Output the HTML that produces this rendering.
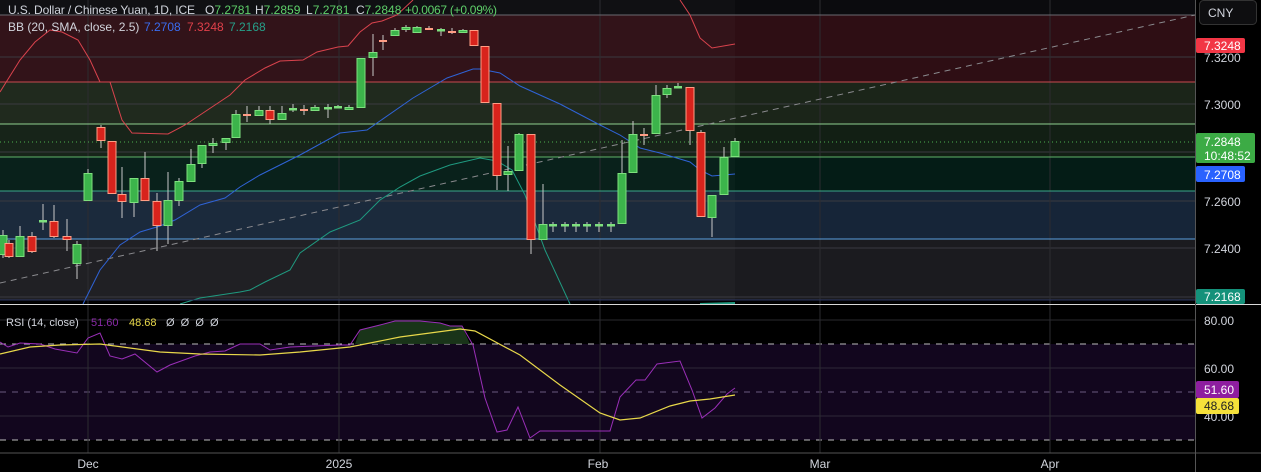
<!DOCTYPE html>
<html><head><meta charset="utf-8">
<style>
html,body{margin:0;padding:0;background:#000;}
body{width:1261px;height:472px;overflow:hidden;position:relative;font-family:"Liberation Sans",sans-serif;}
svg{position:absolute;left:0;top:0;}
</style></head>
<body>
<svg id="s" width="1261" height="472" viewBox="0 0 1261 472" xmlns="http://www.w3.org/2000/svg"></svg>
<script>
var o='';
function R(x,y,w,h,f,ex){o+='<rect x="'+x+'" y="'+y+'" width="'+w+'" height="'+h+'" fill="'+f+'" '+(ex||'')+'/>';}
function L(x1,y1,x2,y2,c,ex){o+='<line x1="'+x1+'" y1="'+y1+'" x2="'+x2+'" y2="'+y2+'" stroke="'+c+'" '+(ex||'')+'/>';}
function P(pts,c,w,ex){o+='<polyline fill="none" stroke="'+c+'" stroke-width="'+(w||1)+'" points="'+pts.map(function(p){return p.join(',')}).join(' ')+'" '+(ex||'')+'/>';}
function T(x,y,t,c,sz,ex){o+='<text x="'+x+'" y="'+y+'" fill="'+c+'" font-size="'+(sz||12)+'" font-family="Liberation Sans, sans-serif" '+(ex||'')+'>'+t+'</text>';}
var W=1195;
R(0,0,W,300,'#0b0b0e');
R(0,15,W,67,'#2e0e14');
R(0,82,W,42,'#1b2519');
R(0,124,W,33,'#121f14');
R(0,157,W,34,'#041c16');
R(0,191,W,48,'#162538');
R(0,239,W,61,'#1b1b1f');
R(0,0,735,300,'#ffffff','opacity="0.025"');
[57,104,152,201,248,297].forEach(function(y){L(0,y,W,y,'#3a3a40');});
[88,339,600,820,1050].forEach(function(x){L(x,0,x,453,'#2c2c30');});
L(0,15,W,15,'#6a6a70');
L(0,82,W,82,'#c84a50');
L(0,124,W,124,'#8fd08f');
L(0,157,W,157,'#5fb36a');
L(0,191,W,191,'#3aa88a');
L(0,239,W,239,'#5aa0e0');
L(0,142,W,142,'#4caf50','stroke-dasharray="1,3"');
L(0,283,W,15,'#8a8a8e','stroke-dasharray="6,5"');
P([[0,92],[20,60],[35,42],[50,30],[62,32],[78,40],[90,60],[100,82],[110,82],[122,120],[132,133],[168,134],[185,125],[200,115],[230,95],[245,80],[265,68],[280,61],[303,60],[317,52],[338,47],[348,46],[360,32],[372,23],[382,21],[397,15],[413,0]],'#d9434d',1);
P([[680,0],[690,15],[700,38],[712,48],[735,44]],'#d9434d',1);
P([[83,304],[100,270],[120,245],[140,232],[160,226],[175,220],[200,205],[225,198],[240,187],[260,175],[300,155],[340,133],[367,130],[413,98],[447,78],[473,69],[480,69],[500,73],[520,86],[560,104],[600,125],[620,135],[640,148],[660,153],[690,162],[700,170],[712,176],[735,174]],'#2f63d6',1);
P([[180,304],[200,298],[240,292],[250,290],[265,282],[290,270],[300,253],[330,232],[360,220],[380,200],[400,187],[420,176],[450,165],[480,158],[497,161],[512,170],[525,195],[545,250],[570,304]],'#1f9a80',1);
P([[700,304],[735,303]],'#1f9a80',2);
var C=[[3,'g',235,255,230,258],[9,'r',243,257,240,258],[20,'g',236,257,226,257],[32,'r',236,252,232,253],[43,'g',220,222,204,230],[54,'r',221,237,205,238],[67,'r',236,240,219,251],[77,'g',244,264,241,279],[88,'g',173,201,169,201],[101,'r',127,141,125,148],[112,'r',141,194,141,194],[122,'r',194,202,167,218],[134,'g',178,203,178,217],[145,'r',178,201,152,201],[157,'r',201,226,193,251],[168,'g',200,226,172,244],[179,'g',181,201,178,206],[191,'g',164,182,149,182],[202,'g',145,164,145,168],[213,'g',143,146,138,153],[226,'g',138,143,138,150],[236,'g',114,138,110,138],[247,'o',114,115,106,122],[259,'g',110,116,106,116],[270,'r',110,120,106,124],[282,'g',113,120,106,120],[293,'g',108,110,104,112],[304,'o',109,111,105,115],[315,'g',107,111,105,111],[328,'g',107,108,104,118],[338,'g',106,108,105,108],[349,'g',107,110,105,110],[361,'g',58,108,58,108],[373,'g',52,58,34,76],[383,'o',40,43,35,50],[395,'g',30,36,28,36],[406,'g',27,30,25,32],[417,'g',27,33,26,33],[429,'o',28,29,26,30],[441,'g',29,30,28,36],[452,'o',31,33,28,34],[463,'g',30,33,29,33],[474,'r',30,46,30,46],[485,'r',46,103,46,103],[497,'r',103,176,103,190],[508,'g',171,175,146,191],[519,'g',134,171,133,171],[531,'r',134,240,134,254],[543,'g',224,240,184,240],[553,'g',224,225,222,232],[565,'g',224,225,222,232],[576,'g',224,225,222,232],[587,'g',224,225,222,232],[599,'g',224,225,222,232],[611,'g',224,225,222,232],[622,'g',173,224,140,224],[633,'g',134,173,121,173],[644,'o',134,135,128,145],[656,'g',95,134,85,134],[667,'g',88,95,85,98],[678,'g',86,88,83,88],[690,'r',87,131,87,145],[701,'r',132,217,130,217],[712,'g',195,218,195,237],[724,'g',157,195,147,195],[735,'g',141,157,138,157]];
C.forEach(function(c){var x=c[0],fill,st;
 if(c[1]=='g'){fill='#3cb44b';st='#7ee07e';}else{fill='#d8231c';st='#ff9d85';}
 L(x,c[4],x,c[5],'#c8c8c8');
 var h=Math.max(c[3]-c[2],1.5);
 if(c[1]=='o'){R(x-4,c[2],8,2,'#ff9d85');}
 else if(h<3){R(x-4,c[2],8,2.5,st);}
 else R(x-4,c[2]+0.5,8,h-1,fill,'stroke="'+st+'" stroke-width="1"');
});
L(0,300,W,300,'#2a3560');
L(0,304.5,1261,304.5,'#d8d8d8');
R(0,344,W,96,'#12061e');
L(0,344,W,344,'#bcbcbc','stroke-dasharray="6,6"');
L(0,392,W,392,'#6a5a80','stroke-dasharray="6,6"');
L(0,440,W,440,'#bcbcbc','stroke-dasharray="6,6"');
L(0,368,W,368,'#2e2838');L(0,416,W,416,'#2e2838');L(0,320,W,320,'#2a2a2e');
[88,339,600,820,1050].forEach(function(x){L(x,305,x,453,'#2c2c30');});
o+='<polygon points="355,344 360,330 380,325 395,321 420,321 440,323 450,326 462,326 470,344" fill="#1c3a1c" opacity="0.9"/>';
P([[0,342],[8,347],[20,343],[40,344],[55,349],[77,353],[88,338],[100,333],[110,356],[122,359],[135,354],[157,372],[170,365],[195,356],[210,352],[225,351],[240,344],[260,344],[270,350],[290,347],[340,345],[350,345],[360,330],[380,325],[395,321],[420,321],[440,323],[450,326],[462,326],[473,345],[485,398],[497,432],[507,430],[518,407],[530,438],[540,431],[610,431],[620,397],[636,380],[645,380],[657,364],[680,361],[692,390],[702,418],[715,408],[727,394],[735,388]],'#9a2fb8',1);
P([[0,354],[30,347],[60,345],[100,344],[160,352],[200,354],[260,355],[300,352],[350,347],[400,337],[460,329],[475,331],[520,355],[560,385],[600,413],[620,420],[640,418],[670,406],[690,401],[710,399],[735,395]],'#e8d84a',1.2);
L(0,453,1261,453,'#555');
L(W+0.5,0,W+0.5,472,'#555');
T(8,14,'U.S. Dollar / Chinese Yuan, 1D, ICE','#d1d4dc',12,'textLength="187"');
T(205,14,'O<tspan fill="#5fd06a">7.2781</tspan>','#d1d4dc',12);
T(255,14,'H<tspan fill="#5fd06a">7.2859</tspan>','#d1d4dc',12);
T(306,14,'L<tspan fill="#5fd06a">7.2781</tspan>','#d1d4dc',12);
T(356,14,'C<tspan fill="#5fd06a">7.2848</tspan>','#d1d4dc',12);
T(405,14,'+0.0067 (+0.09%)','#5fd06a',12,'textLength="92"');
T(8,31,'BB (20, SMA, close, 2.5)','#d1d4dc',12);
T(144,31,'7.2708','#3a6cf0',12);T(187,31,'7.3248','#e0404a',12);T(229,31,'7.2168','#26a08a',12);
T(6,326,'RSI (14, close)','#d1d4dc',11);T(91,326,'51.60','#8a2aa8',11);T(129,326,'48.68','#e8d84a',11);
T(166,326,'Ø  Ø  Ø  Ø','#d1d4dc',11,'xml:space="preserve"');
o+='<rect x="1199.5" y="0.5" width="57" height="24" rx="4" fill="#0e0e10" stroke="#333"/>';
T(1208,17,'CNY','#d1d4dc',12);
[[57,'7.3200'],[104,'7.3000'],[201,'7.2600'],[248,'7.2400'],[320,'80.00'],[368,'60.00'],[416,'40.00']].forEach(function(a){T(1204,a[0]+5,a[1],'#d1d4dc',12);});
o+='<rect x="1196" y="38" width="49" height="15" rx="2" fill="#f23645"/>';T(1204,50,'7.3248','#fff',12);
o+='<rect x="1196" y="133" width="59" height="30" rx="2" fill="#3cab45"/>';T(1204,146,'7.2848','#fff',12);T(1204,160,'10:48:52','#fff',12);
o+='<rect x="1196" y="166" width="49" height="16" rx="2" fill="#2962ff"/>';T(1204,179,'7.2708','#fff',12);
o+='<rect x="1196" y="289" width="49" height="15" rx="2" fill="#14917a"/>';T(1204,301,'7.2168','#fff',12);
o+='<rect x="1196" y="381" width="43" height="17" rx="2" fill="#8e1ea0"/>';T(1204,394,'51.60','#fff',12);
o+='<rect x="1196" y="398" width="43" height="16" rx="2" fill="#f5e03a"/>';T(1204,410,'48.68','#222',12);
[[88,'Dec'],[339,'2025'],[598,'Feb'],[820,'Mar'],[1050,'Apr']].forEach(function(a){T(a[0],468,a[1],'#d1d4dc',12,'text-anchor="middle"');});
document.getElementById('s').innerHTML=o;
</script>
</body></html>
